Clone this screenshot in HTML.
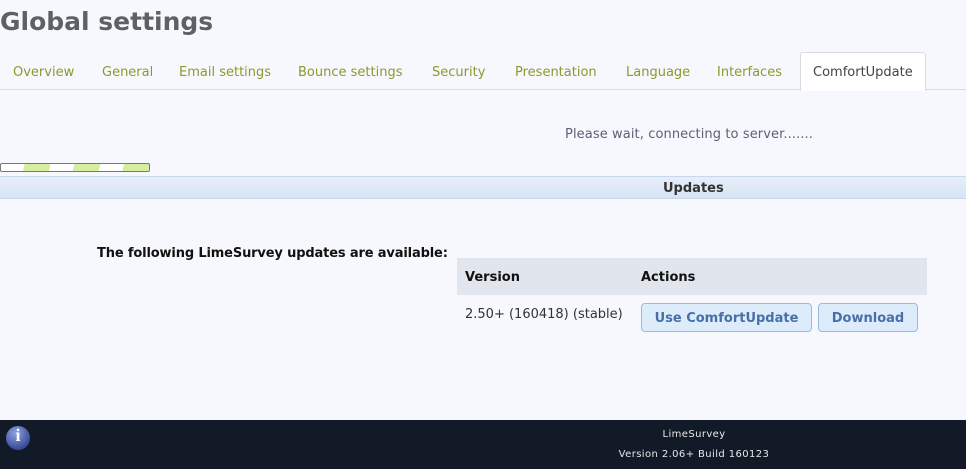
<!DOCTYPE html>
<html><head><style>
body{margin:0;width:966px;height:469px;background:#f7f8fd;font-family:"DejaVu Sans",Verdana,sans-serif;position:relative;overflow:hidden}
.a{position:absolute;white-space:nowrap}
.tab{top:65px;font-size:13px;color:#8a9a2c}
</style></head><body>
<div class="a" style="left:0;top:7px;font-size:25px;font-weight:bold;color:#5f6066">Global settings</div>
<div class="a" style="left:0;top:89px;width:966px;height:1px;background:#d9dbe2"></div>
<div class="a" style="left:800px;top:52px;width:124px;height:38px;border:1px solid #d9dbe2;border-bottom:none;background:#fff;border-radius:3px 3px 0 0"></div>
<div class="a tab" style="left:13px">Overview</div>
<div class="a tab" style="left:102px">General</div>
<div class="a tab" style="left:179px">Email settings</div>
<div class="a tab" style="left:298px">Bounce settings</div>
<div class="a tab" style="left:432px">Security</div>
<div class="a tab" style="left:515px">Presentation</div>
<div class="a tab" style="left:626px">Language</div>
<div class="a tab" style="left:717px">Interfaces</div>
<div class="a tab" style="left:813px;color:#444">ComfortUpdate</div>
<div class="a" style="left:565px;top:127px;font-size:13px;color:#5f5f75;letter-spacing:0.1px">Please wait, connecting to server.......</div>
<div class="a" style="left:0;top:163px;width:148px;height:7px;border:1px solid #777;border-radius:2px;background:repeating-linear-gradient(105deg,#fff 0 23px,#d5ee9f 23px 48px)"></div>
<div class="a" style="left:0;top:176px;width:966px;height:21px;background:linear-gradient(#e6eef8,#d8e4f4);border-top:1px solid #c8d8ec;border-bottom:1px solid #c8d8ec"></div>
<div class="a" style="left:663px;top:181px;font-size:13px;font-weight:bold;color:#333">Updates</div>
<div class="a" style="left:97px;top:246px;font-size:13px;font-weight:bold;color:#111;letter-spacing:-0.15px">The following LimeSurvey updates are available:</div>
<div class="a" style="left:457px;top:258px;width:470px;height:37px;background:#e1e6ee"></div>
<div class="a" style="left:465px;top:270px;font-size:13px;font-weight:bold;color:#111">Version</div>
<div class="a" style="left:641px;top:270px;font-size:13px;font-weight:bold;color:#111">Actions</div>
<div class="a" style="left:465px;top:307px;font-size:13px;color:#333">2.50+ (160418) (stable)</div>
<div class="a" style="left:641px;top:303px;width:169px;height:27px;border:1px solid #94bde6;border-radius:4px;background:#dcecfb;color:#4a6ea8;font-weight:bold;font-size:13px;text-align:center;line-height:30px">Use ComfortUpdate</div>
<div class="a" style="left:818px;top:303px;width:98px;height:27px;border:1px solid #94bde6;border-radius:4px;background:#dcecfb;color:#4a6ea8;font-weight:bold;font-size:13px;text-align:center;line-height:30px">Download</div>
<div class="a" style="left:0;top:420px;width:966px;height:49px;background:#131a27"></div>
<div class="a" style="left:6px;top:426px;width:24px;height:24px;border-radius:50%;background:radial-gradient(circle at 40% 30%,#8fa3e0,#3a4d99 70%)"></div>
<div class="a" style="left:12px;top:425px;width:12px;text-align:center;color:#fff;font:bold 18px 'Liberation Serif',serif">i</div>
<div class="a" style="left:0;top:429px;width:1388px;text-align:center;font-size:10px;color:#e8e8e8;letter-spacing:0.4px">LimeSurvey</div>
<div class="a" style="left:0;top:449px;width:1388px;text-align:center;font-size:10px;color:#e8e8e8;letter-spacing:0.4px">Version 2.06+ Build 160123</div>
</body></html>
